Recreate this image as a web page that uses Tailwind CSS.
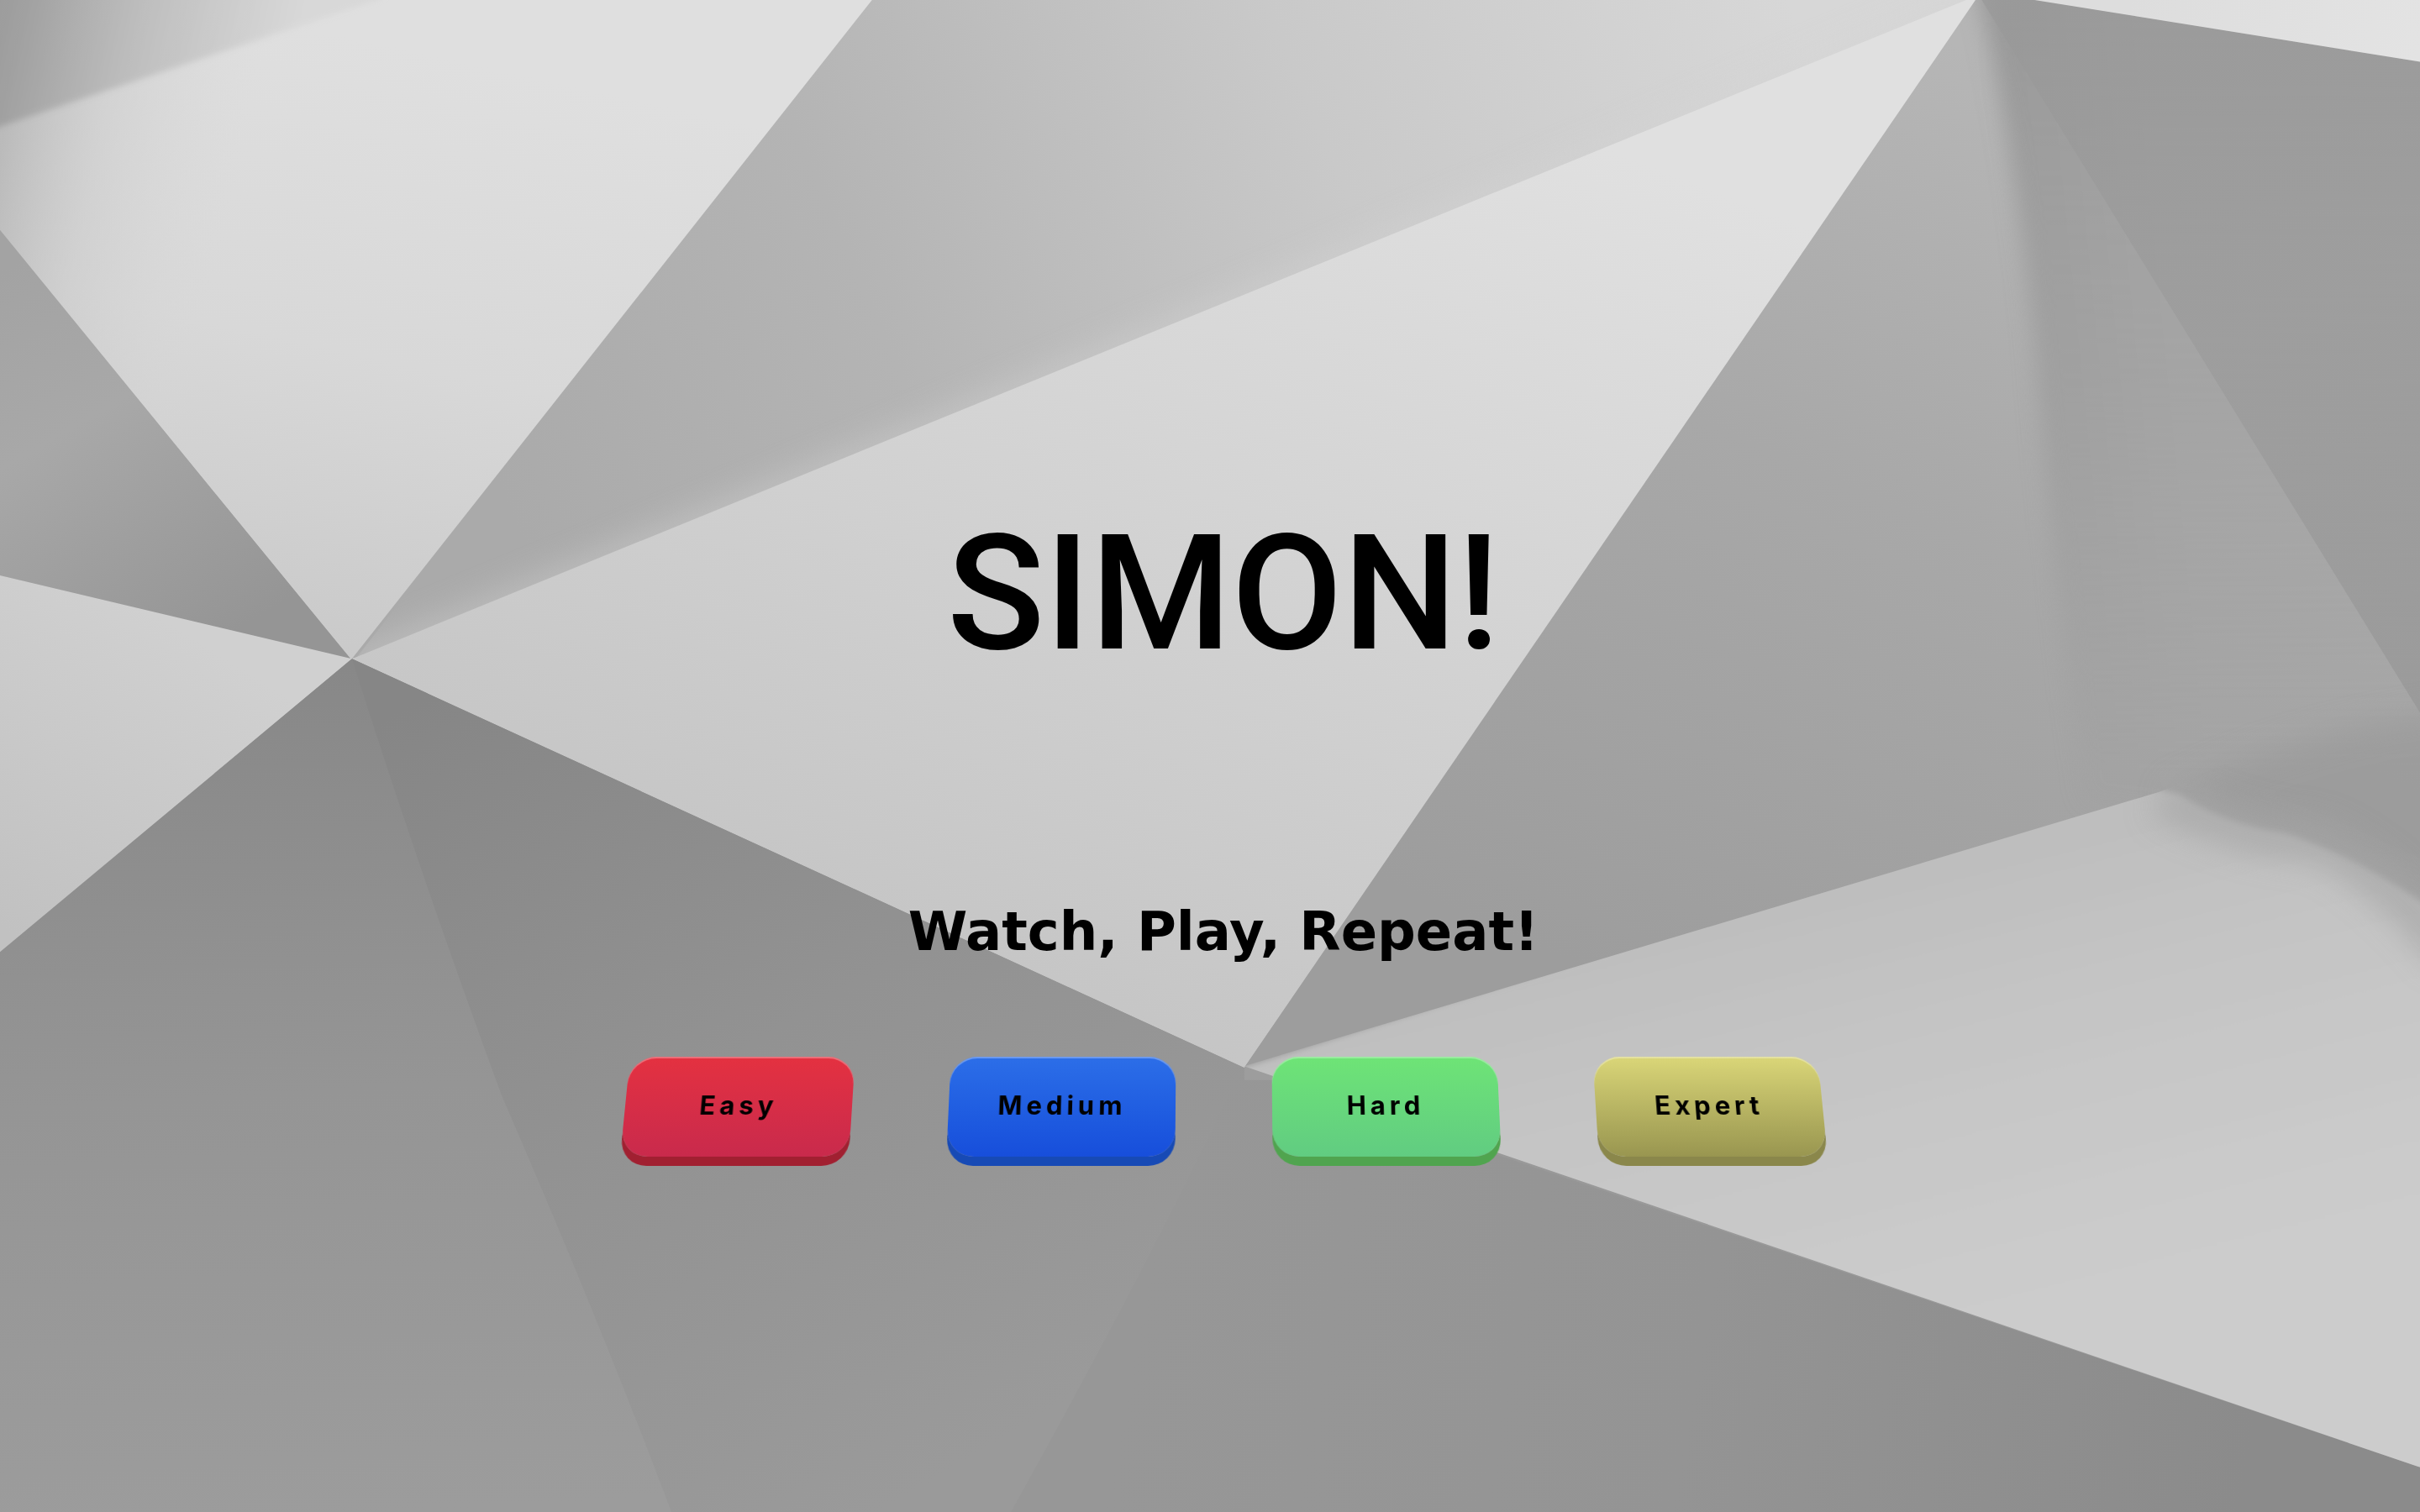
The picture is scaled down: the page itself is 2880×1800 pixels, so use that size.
<!DOCTYPE html>
<html lang="en">
<head>
<meta charset="utf-8">
<meta name="viewport" content="width=device-width, initial-scale=1">
<title>Simon!</title>
<script src="https://cdn.jsdelivr.net/npm/@tailwindcss/browser@4"></script>
</head>
<body class="relative min-h-screen overflow-x-hidden bg-[#999999] text-black">
  <!-- folded paper backdrop -->
  <svg class="absolute inset-0 h-full w-full" viewBox="0 0 1568 980" preserveAspectRatio="xMidYMid slice" aria-hidden="true">
    <defs>
      <linearGradient id="topLeft" gradientUnits="userSpaceOnUse" x1="300" y1="40" x2="215" y2="430"><stop offset="0" stop-color="#dfdfdf"/><stop offset=".5" stop-color="#d8d8d8"/><stop offset="1" stop-color="#c9c9c9"/></linearGradient>
      <linearGradient id="leftShade" gradientUnits="userSpaceOnUse" x1="0" y1="100" x2="150" y2="130"><stop offset="0" stop-color="#b0b0b0" stop-opacity=".75"/><stop offset=".4" stop-color="#c4c4c4" stop-opacity=".4"/><stop offset="1" stop-color="#d8d8d8" stop-opacity="0"/></linearGradient>
      <linearGradient id="corner" gradientUnits="userSpaceOnUse" x1="0" y1="0" x2="190" y2="40"><stop offset="0" stop-color="#929292"/><stop offset=".5" stop-color="#b8b8b8"/><stop offset="1" stop-color="#d6d6d6"/></linearGradient>
      <linearGradient id="upper" gradientUnits="userSpaceOnUse" x1="330" y1="330" x2="1150" y2="-20"><stop offset="0" stop-color="#aaaaaa"/><stop offset=".3" stop-color="#b4b4b4"/><stop offset=".65" stop-color="#c9c9c9"/><stop offset="1" stop-color="#d7d7d7"/></linearGradient>
      <linearGradient id="centre" gradientUnits="userSpaceOnUse" x1="1000" y1="80" x2="760" y2="690"><stop offset="0" stop-color="#e0e0e0"/><stop offset=".5" stop-color="#d3d3d3"/><stop offset="1" stop-color="#c5c5c5"/></linearGradient>
      <linearGradient id="leftDark" gradientUnits="userSpaceOnUse" x1="10" y1="170" x2="150" y2="410"><stop offset="0" stop-color="#a3a3a3"/><stop offset=".4" stop-color="#a8a8a8"/><stop offset="1" stop-color="#959595"/></linearGradient>
      <linearGradient id="leftLight" gradientUnits="userSpaceOnUse" x1="120" y1="410" x2="0" y2="600"><stop offset="0" stop-color="#d0d0d0"/><stop offset="1" stop-color="#c1c1c1"/></linearGradient>
      <linearGradient id="floorA" gradientUnits="userSpaceOnUse" x1="228" y1="430" x2="260" y2="980"><stop offset="0" stop-color="#888888"/><stop offset=".5" stop-color="#959595"/><stop offset="1" stop-color="#9c9c9c"/></linearGradient>
      <linearGradient id="floorB" gradientUnits="userSpaceOnUse" x1="260" y1="460" x2="570" y2="980"><stop offset="0" stop-color="#868686"/><stop offset=".5" stop-color="#929292"/><stop offset="1" stop-color="#9a9a9a"/></linearGradient>
      <linearGradient id="floorC" gradientUnits="userSpaceOnUse" x1="740" y1="850" x2="1450" y2="980"><stop offset="0" stop-color="#979797"/><stop offset=".5" stop-color="#949494"/><stop offset="1" stop-color="#8b8b8b"/></linearGradient>
      <linearGradient id="rightFace" gradientUnits="userSpaceOnUse" x1="1270" y1="30" x2="1010" y2="620"><stop offset="0" stop-color="#b6b6b6"/><stop offset=".45" stop-color="#a8a8a8"/><stop offset="1" stop-color="#9d9d9d"/></linearGradient>
      <linearGradient id="ridge" gradientUnits="userSpaceOnUse" x1="1300" y1="200" x2="1400" y2="190"><stop offset="0" stop-color="#989898"/><stop offset="1" stop-color="#a0a0a0"/></linearGradient>
      <linearGradient id="rightDark" gradientUnits="userSpaceOnUse" x1="1430" y1="40" x2="1568" y2="450"><stop offset="0" stop-color="#999999"/><stop offset=".4" stop-color="#9b9b9b"/><stop offset="1" stop-color="#969696"/></linearGradient>
      <linearGradient id="lowerRight" gradientUnits="userSpaceOnUse" x1="1180" y1="580" x2="1250" y2="860"><stop offset="0" stop-color="#bebebe"/><stop offset=".4" stop-color="#c5c5c5"/><stop offset="1" stop-color="#cccccc"/></linearGradient>
      <linearGradient id="topRight" gradientUnits="userSpaceOnUse" x1="1380" y1="0" x2="1568" y2="30"><stop offset="0" stop-color="#dddddd"/><stop offset="1" stop-color="#e3e3e3"/></linearGradient>
      <linearGradient id="fade" gradientUnits="userSpaceOnUse" x1="0" y1="10" x2="0" y2="500"><stop offset="0" stop-color="#fff"/><stop offset=".5" stop-color="#fff" stop-opacity=".7"/><stop offset="1" stop-color="#fff" stop-opacity=".15"/></linearGradient>
      <mask id="ridgeMask"><rect width="1568" height="980" fill="url(#fade)"/></mask>
      <filter id="soft2" x="-20%" y="-20%" width="140%" height="140%"><feGaussianBlur stdDeviation="2"/></filter>
      <filter id="soft7" x="-20%" y="-20%" width="140%" height="140%"><feGaussianBlur stdDeviation="7"/></filter>
      <filter id="soft10" x="-30%" y="-30%" width="160%" height="160%"><feGaussianBlur stdDeviation="10"/></filter>
      <clipPath id="clipRight"><path d="M1280 0 1320 0 1568 40V980H806V692Z"/></clipPath>
      <clipPath id="clipLower"><path d="M806 691 1400 513 1568 440V951Z"/></clipPath>
      <clipPath id="clipUpper"><path d="M565 0H1280L228 430Z"/></clipPath>
    </defs>

    <path d="M0 0H566L228 428 0 150Z" fill="url(#topLeft)"/>
    <path d="M0 0H228V428L0 150Z" fill="url(#leftShade)"/>
    <path d="M-10-10H260L244 0 0 82-10 88Z" fill="url(#corner)" filter="url(#soft2)" opacity=".75"/>
    <path d="M565 0H1278L228 427Z" fill="url(#upper)"/>
    <g clip-path="url(#clipUpper)"><path d="M230 436 1274 8" stroke="#d4d4d4" stroke-width="30" opacity=".4" filter="url(#soft10)"/></g>
    <path d="M1274 0H1281L807 692 800 693 228 427Z" fill="url(#centre)"/>
    <path d="M0 149 227 427 0 373Z" fill="url(#leftDark)"/>
    <path d="M0 373 228 427 0 618Z" fill="url(#leftLight)"/>

    <path d="M228 427 0 617V980H1568V951L806 692Z" fill="url(#floorA)"/>
    <path d="M228 427Q270 560 325 710 390 860 435 980H1568V951L806 692Z" fill="url(#floorB)"/>
    <path d="M804 692Q755 800 655 980H1568V951Z" fill="url(#floorC)"/>

    <g clip-path="url(#clipRight)">
      <path d="M1278 0H1568V700H806V692Z" fill="url(#rightFace)"/>
      <g mask="url(#ridgeMask)"><path d="M1281-10Q1306 100 1318 220 1330 370 1350 520L1700 560V-60Z" fill="url(#ridge)" filter="url(#soft7)"/></g>
      <path d="M1284 0 1568 462V0Z" fill="url(#rightDark)" opacity=".7"/>
      <path d="M1400 515Q1500 470 1600 460V600Q1500 550 1400 515Z" fill="#979797" opacity=".6" filter="url(#soft10)"/>
    </g>
    <g clip-path="url(#clipLower)">
      <path d="M780 700 1385 508 1412 515Q1440 534 1480 540 1530 555 1590 600V980H1568Z" fill="url(#lowerRight)" filter="url(#soft2)"/>
      <path d="M1400 516Q1450 542 1500 545 1540 560 1590 620" fill="none" stroke="#a4a4a4" stroke-width="26" opacity=".7" filter="url(#soft10)"/>
    </g>
    <path d="M1312-1H1568V40Z" fill="url(#topRight)"/>
  </svg>

  <main class="relative flex min-h-screen flex-col items-center justify-center pt-[188px] pl-8">
    <h1 class="font-[Roboto,sans-serif] text-[192px] leading-none font-medium">SIMON!</h1>
    <p class="mt-[274px] font-['DejaVu_Sans',sans-serif] text-[64px] leading-none font-bold">Watch, Play, Repeat!</p>
    <div class="mt-29 flex gap-[115px] font-[Inter,sans-serif] text-[31px] leading-none font-bold tracking-[5px] perspective-[1000px]">
      <button type="button" class="h-[120px] w-[270px] rotate-x-[8deg] rounded-[32px] bg-linear-to-b from-[#e43140] to-[#c92a4c] pb-1 shadow-[0_11px_0_#a12031,inset_0_2px_0_rgba(255,255,255,0.3)]">Easy</button>
      <button type="button" class="h-[120px] w-[270px] rotate-x-[8deg] rounded-[32px] bg-linear-to-b from-[#2c6ee8] to-[#174edb] pb-1 shadow-[0_11px_0_#174ab5,inset_0_2px_0_rgba(255,255,255,0.3)]">Medium</button>
      <button type="button" class="h-[120px] w-[270px] rotate-x-[8deg] rounded-[32px] bg-linear-to-b from-[#6ee476] to-[#61cc81] pb-1 shadow-[0_11px_0_#50a44f,inset_0_2px_0_rgba(255,255,255,0.3)]">Hard</button>
      <button type="button" class="h-[120px] w-[270px] rotate-x-[8deg] rounded-[32px] bg-linear-to-b from-[#dad678] to-[#999650] pb-1 shadow-[0_11px_0_#8a874b,inset_0_2px_0_rgba(255,255,255,0.3)]">Expert</button>
    </div>
  </main>
</body>
</html>
